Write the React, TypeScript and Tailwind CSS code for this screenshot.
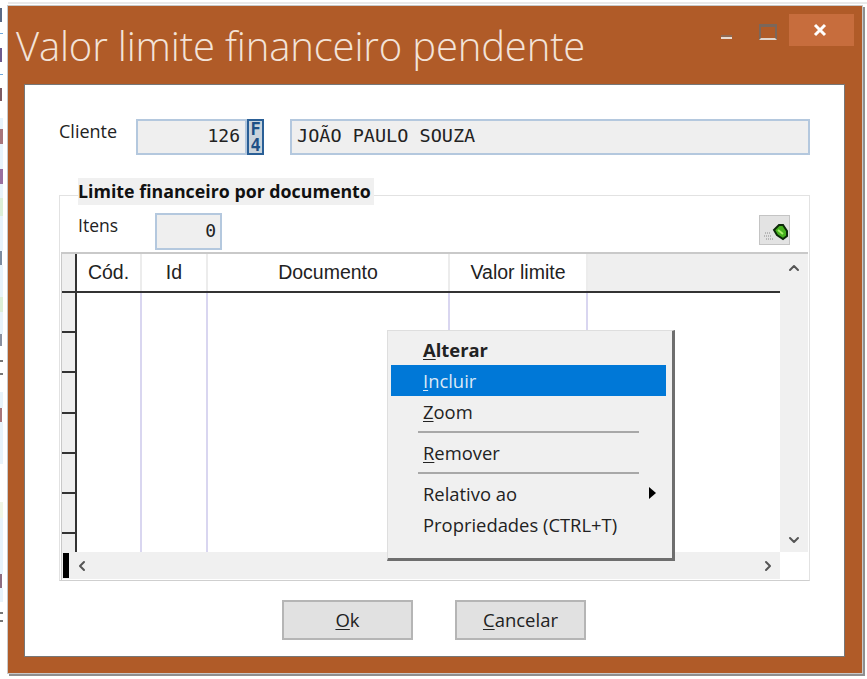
import { ChevronDown, ChevronLeft, ChevronRight, ChevronUp } from "lucide-react"

const COLUMNS = [
  { label: "Cód.", width: "w-[65px]" },
  { label: "Id", width: "w-[66px]" },
  { label: "Documento", width: "w-[242px]" },
  { label: "Valor limite", width: "w-[138px]" },
]

// restos da janela de tras, visiveis na margem esquerda
const BACK_STRIP = [
  "mt-[8px] h-[14px] w-[2px] bg-[#5a6a86]",
  "mt-[11px] h-[1px] w-[3px] bg-[#6fa8dc]",
  "mt-[14px] h-[14px] w-[2px] bg-[#6d5a8e]",
  "mt-[12px] h-[1px] w-[3px] bg-[#6fa8dc]",
  "mt-[13px] h-[13px] w-[2px] bg-[#7d5a62]",
  "mt-[17px] h-[11px] w-[3px] bg-[#e8f3fb]",
  "h-[15px] w-[3px] bg-[#a8757a]",
  "h-[25px] w-[3px] bg-[#e8f3fb]",
  "h-[15px] w-[3px] bg-[#9a6f9e]",
  "h-[14px] w-[3px] bg-[#e8f3fb]",
  "h-[18px] w-[3px] bg-[#dcefd8]",
  "h-[35px] w-[3px] bg-[#e8f3fb]",
  "h-[14px] w-[2px] bg-[#7d8ca0]",
  "h-[32px] w-[3px] bg-[#e8f3fb]",
  "h-[15px] w-[3px] bg-[#dcefd8]",
  "h-[22px] w-[3px] bg-[#e8f3fb]",
  "h-[12px] w-[2px] bg-[#8a90a0]",
  "mt-[14px] h-[2px] w-[3px] bg-[#777]",
  "mt-[11px] h-[2px] w-[3px] bg-[#777]",
  "mt-[17px] h-[16px] w-[3px] bg-[#e8f3fb]",
  "h-[14px] w-[2px] bg-[#a8757a]",
  "h-[42px] w-[3px] bg-[#e8f3fb]",
  "mt-[38px] h-[16px] w-[3px] bg-[#f0f6e6]",
  "h-[40px] w-[3px] bg-[#e8f3fb]",
  "h-[16px] w-[3px] bg-[#e8f3fb]",
  "h-[14px] w-[2px] bg-[#8e6c80]",
  "h-[14px] w-[3px] bg-[#e8f3fb]",
  "mt-[10px] h-[2px] w-[3px] bg-[#777]",
  "mt-[6px] h-[2px] w-[3px] bg-[#777]",
]

function Field({ className, children }: { className: string; children?: React.ReactNode }) {
  return (
    <div
      className={`flex items-center whitespace-pre border-2 border-[#b4c8de] bg-[#efefef] pb-[3px] font-['DejaVu_Sans_Mono',monospace] text-[#222] ${className}`}
    >
      {children}
    </div>
  )
}

function DialogButton({ hotkey, rest }: { hotkey: string; rest: string }) {
  return (
    <div className="flex h-10 w-[131px] items-center justify-center border-2 border-[#b5b5b5] bg-[#e1e1e1] text-[18.5px] text-[#222]">
      <span className="underline underline-offset-2">{hotkey}</span>
      {rest}
    </div>
  )
}

function MenuItem({ hotkey, rest, bold, active }: { hotkey?: string; rest: string; bold?: boolean; active?: boolean }) {
  return (
    <div
      className={`flex h-[31px] items-center pl-8 text-[18.4px] ${bold ? "font-bold text-[#111]" : ""} ${active ? "bg-[#0078d7] text-[#dbe9f6]" : "text-[#222]"}`}
    >
      {hotkey && <span className="underline underline-offset-2">{hotkey}</span>}
      {rest}
    </div>
  )
}

function EmptyRow() {
  return <div className="h-[40.2px] shrink-0 border-b-2 border-[#333]" />
}

export default function App() {
  return (
    <div className="flex h-[679px] w-[867px] overflow-hidden bg-white font-['Open_Sans',sans-serif]">
      <div className="flex w-2 shrink-0 flex-col">
        {BACK_STRIP.map((cls, i) => (
          <div key={i} className={`shrink-0 ${cls}`} />
        ))}
      </div>

      <div className="flex w-[859px] flex-col">
        <div className="mt-[2px] h-[2px] shrink-0 bg-[#e9e9e9]" />
        <div className="mt-[2px] flex h-[667px] w-[854px] flex-col bg-[#b05b28] pb-4 pl-4 pr-[17px] shadow-[0_0_0_1px_#c9c9c9,2px_2px_0_1px_#8f8f8f]">
          <div className="flex h-[78px] shrink-0">
            <div className="-ml-2 pt-[12px] text-[40px] font-light leading-[56px] tracking-[-0.15px] text-[#f3e3d8]">
              Valor limite financeiro pendente
            </div>
            <div className="-mr-[9px] ml-auto flex h-8 items-start pt-2">
              <div className="mr-[27px] mt-[21px] h-1 w-[11px] border-b-2 border-t-2 border-b-[#e9dcd2] border-t-[#8d6a55]" />
              <div className="mr-3 mt-[10px] h-[16px] w-[18px] border-x-2 border-b-2 border-t-[3px] border-x-[#7b675b] border-b-[#e2d6cd] border-t-[#7b675b]" />
              <div className="flex h-8 w-[65px] items-center justify-center bg-[#c76d3d] pr-1">
                <svg viewBox="0 0 14 14" className="h-[14px] w-[14px]">
                  <path d="M2 2l10 10M12 2L2 12" stroke="#fff" strokeWidth="3" />
                </svg>
              </div>
            </div>
          </div>

          <div className="relative flex flex-1 flex-col border border-[#777] bg-white pl-[34px] pr-[34px] pt-[34px]">
            <div className="flex h-9 shrink-0 items-start">
              <div className="w-[77px] text-[18px] leading-6 text-[#222]">Cliente</div>
              <Field className="h-9 w-[111px] justify-end pr-[5px] text-[18px]">126</Field>
              <div className="h-9 w-[17px] whitespace-pre-line border-2 border-[#2a5f96] bg-[#c9d3dc] text-center font-['DejaVu_Sans_Mono',monospace] text-[17px] font-bold leading-[16px] text-[#1c4f86]">
                {"F\n4"}
              </div>
              <Field className="ml-[26px] h-9 flex-1 pl-[5px] text-[18.5px]">JOÃO PAULO SOUZA</Field>
            </div>

            <div className="relative mt-10 flex h-[386px] shrink-0 flex-col border border-[#e2e2e2] border-b-[#cfcfcf] px-[1px]">
              <div className="absolute -top-[18px] left-[18px] flex h-[27px] w-[296px] items-center bg-[#f0f0f0] text-[17.8px] font-bold text-[#111]">
                Limite financeiro por documento
              </div>

              <div className="flex h-[56px] shrink-0 items-start pl-[17px] pt-[17px]">
                <div className="w-[77px] pt-[2px] text-[17.5px] leading-5 text-[#222]">Itens</div>
                <Field className="h-[37px] w-[67px] justify-end pr-1 text-[18px]">0</Field>
                <div className="ml-auto mr-[18px] mt-[2px] flex h-[30px] w-[31px] items-center justify-center border border-[#c4c4c4] bg-[#e3e3e3]">
                  <svg viewBox="0 0 26 22" className="h-[22px] w-[26px]">
                    <path d="M3 14h5M2 17h8M4 20h7" stroke="#8a8a8a" strokeWidth="1" strokeDasharray="1 1" />
                    <path d="M12 11l5-5h4l4 6v5l-4 3-6-4z" fill="#46b21e" stroke="#0d2a0a" strokeWidth="2" />
                    <path d="M16 11l5 4" stroke="#a6ef6a" strokeWidth="2" />
                  </svg>
                </div>
              </div>

              <div className="flex min-h-0 flex-1 border-t-2 border-[#c9c9c9]">
                <div className="flex min-w-0 flex-1 flex-col border-l border-[#c9c9c9]">
                  <div className="relative flex h-[298px] shrink-0 flex-col overflow-hidden">
                    <div className="flex h-[39px] shrink-0 border-b-2 border-[#333]">
                      <div className="w-[13px] bg-[#efefef]" />
                      <div className="w-[2px] bg-[#333]" />
                      {COLUMNS.map((col) => (
                        <div
                          key={col.label}
                          className={`flex shrink-0 items-center justify-center border-r-2 border-[#ececec] font-['Liberation_Sans',sans-serif] text-[19.5px] text-[#222] ${col.width}`}
                        >
                          {col.label}
                        </div>
                      ))}
                      <div className="flex-1 bg-[#efefef]" />
                    </div>
                    <div className="flex min-h-0 flex-1">
                      <div className="flex w-[13px] flex-col overflow-hidden bg-[#efefef]">
                        <EmptyRow />
                        <EmptyRow />
                        <EmptyRow />
                        <EmptyRow />
                        <EmptyRow />
                        <EmptyRow />
                        <EmptyRow />
                        <EmptyRow />
                      </div>
                      <div className="w-[2px] bg-[#333]" />
                      {COLUMNS.map((col) => (
                        <div key={col.label} className={`shrink-0 border-r-2 border-[#d9d6f0] ${col.width}`} />
                      ))}
                    </div>
                  </div>
                  <div className="flex h-[27px] items-center bg-[#f0f0f0] pl-[1px]">
                    <div className="h-[25px] w-[6px] bg-black" />
                    <ChevronLeft size={16} strokeWidth={3} className="ml-[5px] text-[#555]" />
                    <ChevronRight size={16} strokeWidth={3} className="ml-auto mr-[4px] text-[#555]" />
                  </div>
                </div>
                <div className="flex w-[28px] shrink-0 flex-col">
                  <div className="flex h-[298px] flex-col items-center justify-between bg-[#f0f0f0] pb-1 pt-[6px]">
                    <ChevronUp size={16} strokeWidth={3} className="text-[#555]" />
                    <ChevronDown size={16} strokeWidth={3} className="text-[#555]" />
                  </div>
                </div>
              </div>
            </div>

            <div className="mt-[19px] flex justify-start gap-[42px] pl-[223px]">
              <DialogButton hotkey="O" rest="k" />
              <DialogButton hotkey="C" rest="ancelar" />
            </div>

            {/* menu de contexto por cima da grade */}
            <div className="absolute left-[362px] top-[245px] h-[231px] w-[288px] border border-[#dedede] border-b-[3px] border-r-[3px] border-b-[#6e6e6e] border-r-[#6e6e6e] bg-[#f0f0f0] pl-[3px] pr-[6px] pt-[3px]">
              <MenuItem hotkey="A" rest="lterar" bold />
              <MenuItem hotkey="I" rest="ncluir" active />
              <MenuItem hotkey="Z" rest="oom" />
              <div className="my-[4px] ml-[27px] mr-[27px] h-[2px] bg-[#a8a8a8]" />
              <MenuItem hotkey="R" rest="emover" />
              <div className="my-[4px] ml-[27px] mr-[27px] h-[2px] bg-[#a8a8a8]" />
              <div className="relative">
                <MenuItem rest="Relativo ao" />
                <div className="absolute right-[10px] top-[9px] h-0 w-0 border-y-[6px] border-l-[7px] border-y-transparent border-l-black" />
              </div>
              <MenuItem rest="Propriedades (CTRL+T)" />
            </div>
          </div>
        </div>
      </div>
    </div>
  )
}
